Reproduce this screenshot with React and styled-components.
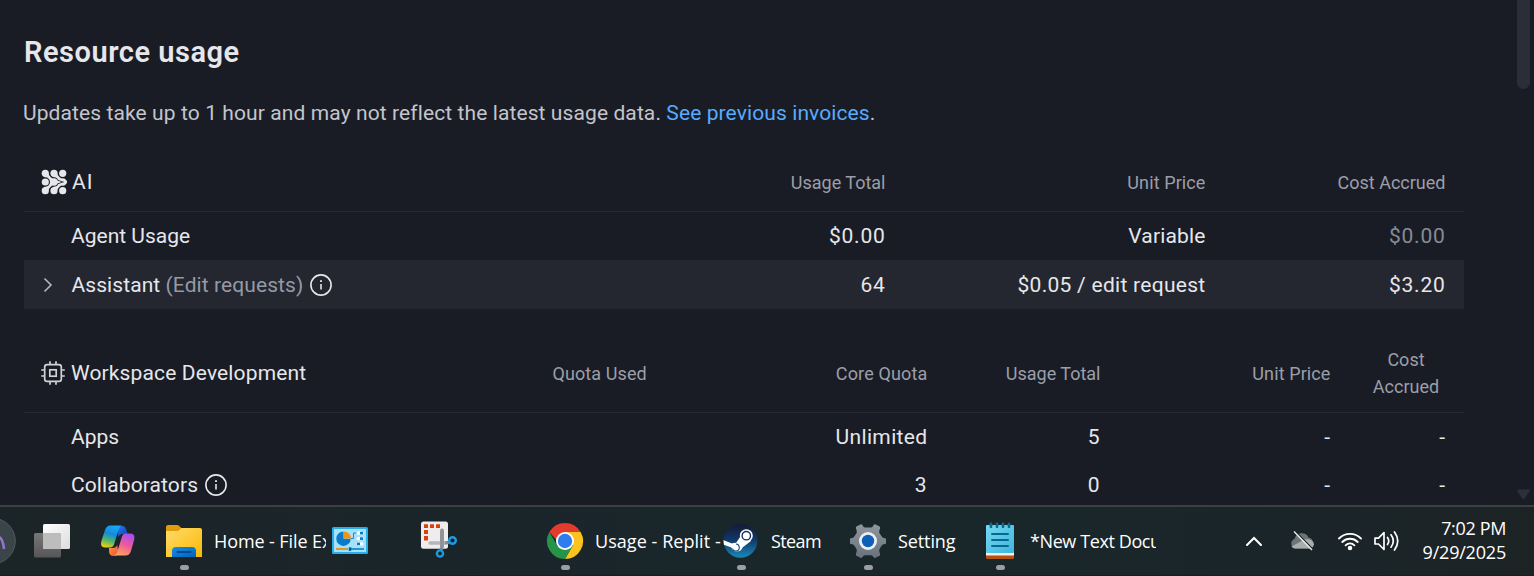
import React from "react";
import styled, { createGlobalStyle } from "styled-components";

const Global = createGlobalStyle`
  * { box-sizing: border-box; }
  body { margin: 0; overflow: hidden; background: #1a1c25; }
`;

const Screen = styled.div`
  width: 1534px;
  height: 576px;
  display: flex;
  flex-direction: column;
  overflow: hidden;
  background: #1a1c25;
  color: #e6e7eb;
  font-family: Roboto, "Noto Sans", sans-serif;
  font-size: 21px;
  line-height: 30px;
  white-space: nowrap;
`;

const Viewport = styled.div`
  height: 505px;
  display: flex;
  overflow: hidden;
`;

const Page = styled.main`
  flex: 1;
  padding: 32px 0 0 24px;
  overflow: hidden;
`;

const Scrollbar = styled.div`
  width: 17px;
  display: flex;
  flex-direction: column;
  align-items: flex-start;
  justify-content: space-between;
  padding-bottom: 5px;
`;

const Thumb = styled.div`
  width: 13px;
  height: 89px;
  border-radius: 0 0 7px 7px;
  background: #2b2d39;
`;

const Title = styled.h1`
  margin: 0;
  font-size: 29px;
  line-height: 40px;
  font-weight: 600;
  letter-spacing: 0.52px;
`;

const Note = styled.p`
  margin: 25px 0 0 -1px;
  line-height: 32px;
  color: #c2c5cc;
  letter-spacing: 0.1px;
`;

const Link = styled.a`
  color: #57abff;
`;

const Table = styled.section`
  width: 1440px;
  margin-top: ${(p) => p.$top}px;
`;

const Row = styled.div`
  display: grid;
  grid-template-columns: ${(p) => p.$cols};
  align-items: center;
  height: ${(p) => p.$height || 48}px;
  padding-right: 18.5px;
  background: ${(p) => (p.$active ? "#242630" : "transparent")};
`;

const HeadRow = styled(Row)`
  border-bottom: 1px solid #262834;
`;

const NameCell = styled.div`
  display: flex;
  align-items: center;
  gap: ${(p) => p.$gap || 6}px;
  padding-left: ${(p) => p.$inset || 47}px;
  letter-spacing: ${(p) => p.$track || 0}px;
`;

const Muted = styled.span`
  color: #959aa5;
`;

const Cell = styled.div`
  padding-right: ${(p) => p.$end || 0}px;
  text-align: right;
  letter-spacing: ${(p) => p.$track || 0}px;
  color: ${(p) => (p.$muted ? "#868b96" : "inherit")};
`;

const Head = styled.div`
  padding-top: 1px;
  font-size: 18px;
  line-height: 27px;
  text-align: right;
  letter-spacing: ${(p) => p.$track || 0}px;
  color: #9b9fa9;
`;

const WrappedHead = styled(Head)`
  padding: 0 0 0 36px;
  text-align: center;
`;

const Taskbar = styled.footer`
  height: 71px;
  display: flex;
  align-items: flex-start;
  border-top: 2px solid #3b4043;
  border-bottom: 1px solid #1a1a28;
  background: linear-gradient(90deg, #1b2427 0%, #1b252a 20%, #19262a 45%, #1a262a 75%, #1b2529 86%, #1d2325 100%);
  font-family: "Open Sans", "Noto Sans", sans-serif;
  font-size: 18px;
  line-height: 24px;
  color: #fff;
`;

const Avatar = styled.div`
  width: 34px;
  height: 68px;
  overflow: hidden;
`;

const TaskButton = styled.div`
  width: ${(p) => p.$width}px;
  height: 68px;
  display: flex;
  align-items: flex-start;
`;

const IconBox = styled.div`
  width: 36px;
  flex: none;
  display: flex;
  flex-direction: column;
  align-items: center;
  padding-top: 16px;
  svg { display: block; overflow: visible; }
`;

const Running = styled.i`
  width: 9px;
  height: 5px;
  margin-top: 6px;
  border-radius: 3px;
  background: #9a9fa1;
`;

const Label = styled.span`
  margin: 22px 0 0 12px;
  width: ${(p) => p.$width || 140}px;
  overflow: hidden;
  letter-spacing: ${(p) => p.$track}px;
`;

const Tray = styled.div`
  display: flex;
  align-items: center;
  height: 68px;
  flex: 1;
  svg { display: block; flex: none; }
`;

const TrayIcon = styled.span`
  margin-left: ${(p) => p.$left || 0}px;
`;

const Clock = styled.div`
  flex: 1;
  padding: 0 28px 3px 0;
  text-align: right;
`;

const ClockLine = styled.div`
  letter-spacing: ${(p) => p.$track}px;
`;

const Info = () => (
  <svg width="24" height="24" viewBox="0 0 24 24" fill="none" stroke="currentColor">
    <circle cx="12" cy="12" r="10.1" strokeWidth="1.6" />
    <path d="M12 11v5.500" strokeWidth="1.6" />
    <path d="M12 7.200v1.800" strokeWidth="1.9" />
  </svg>
);

const AiIcon = () => (
  <svg width="26" height="26" viewBox="0 0 26 26" fill="#e6e7eb">
    <path d="M13 4.300Q16 11 21.700 13 16 15 13 21.700" fill="none" stroke="#e6e7eb" strokeWidth="5" />
    <circle cx="13" cy="4.300" r="3.600" />
    <circle cx="21.700" cy="13" r="3.700" />
    <circle cx="13" cy="21.700" r="3.600" />
    <circle cx="21.700" cy="4.300" r="3.600" />
    <circle cx="21.700" cy="21.700" r="3.600" />
    <path d="M4.300 4.300Q7 11 13 13 7 15 4.300 21.700" fill="none" stroke="#1a1c25" strokeWidth="6.500" />
    <circle cx="13" cy="13" r="4.700" fill="#1a1c25" />
    <path d="M4.300 4.300Q7 11 13 13 7 15 4.300 21.700" fill="none" stroke="#e6e7eb" strokeWidth="5" />
    <circle cx="13" cy="13" r="3.700" />
    <circle cx="4.300" cy="4.300" r="3.600" />
    <circle cx="4.300" cy="21.700" r="3.600" />
    <circle cx="4.300" cy="13" r="4.700" fill="#1a1c25" />
    <circle cx="4.300" cy="13" r="3.600" />
  </svg>
);

const Chip = () => (
  <svg width="26" height="26" viewBox="0 0 26 26" fill="none" stroke="#d0d2d8" strokeWidth="1.7">
    <rect x="4.700" y="4.700" width="16.600" height="16.600" rx="2.400" />
    <rect x="9.800" y="9.800" width="6.400" height="6.400" />
    <path d="M10 1.200v3.500M16 1.200v3.500M10 21.300v3.500M16 21.300v3.500M1.200 10h3.500M1.200 16h3.500M21.300 10h3.500M21.300 16h3.500" />
  </svg>
);

const Chevron = () => (
  <svg width="10" height="16" viewBox="0 0 10 16" fill="none" stroke="#b4b7bf" strokeWidth="1.6">
    <path d="M1.500 1.500 8 8 1.500 14.500" />
  </svg>
);

const TaskView = () => (
  <svg width="36" height="36" viewBox="0 0 36 36">
    <defs>
      <linearGradient id="tvw" x1="0" y1="0" x2="1" y2="1"><stop stopColor="#fff" /><stop offset="1" stopColor="#dcdcdc" /></linearGradient>
      <linearGradient id="tvg" x1="0" y1="0" x2="0" y2="1"><stop stopColor="#777" /><stop offset="1" stopColor="#565656" /></linearGradient>
    </defs>
    <rect x="0" y="10" width="27" height="24.500" rx="1.500" fill="url(#tvg)" />
    <rect x="9" y="1" width="27" height="25" rx="1.500" fill="url(#tvw)" />
    <path d="M9 10h17a1 1 0 0 1 1 1v15H10a1 1 0 0 1-1-1Z" fill="#bdbdbd" />
  </svg>
);

const Copilot = () => (
  <svg width="36" height="36" viewBox="0 0 36 36">
    <defs>
      <linearGradient id="cpa" x1=".6" y1="0" x2=".3" y2="1"><stop stopColor="#18a8f4" /><stop offset=".4" stopColor="#1689dc" /><stop offset=".7" stopColor="#55b665" /><stop offset="1" stopColor="#f0ce14" /></linearGradient>
      <linearGradient id="cpb" x1=".7" y1="0" x2=".3" y2="1"><stop stopColor="#a94df0" /><stop offset=".5" stopColor="#ed5a9b" /><stop offset="1" stopColor="#ffa45b" /></linearGradient>
      <linearGradient id="cpc" x1="0" y1="0" x2="1" y2="1"><stop stopColor="#2380ef" /><stop offset="1" stopColor="#163bb8" /></linearGradient>
      <linearGradient id="cpd" x1="0" y1="0" x2="1" y2="1"><stop stopColor="#ff9b36" /><stop offset="1" stopColor="#ee4f43" /></linearGradient>
    </defs>
    <path d="M16 3h6.500q2.700 0 3.500 2.700l1.600 5.300h-5q-3 0-4.200 3L18 9Z" fill="url(#cpc)" />
    <path d="M9 25h4q3 0 4.200-3l1 6-2 5h-3q-3 0-4-3Z" fill="url(#cpd)" />
    <path d="M10.500 2.500H22q-2.500.7-3.500 4.500L14 21.500q-1 3-4 3H5q-5.200 0-3.600-6.500L5 7Q6.500 2.500 10.500 2.500Z" fill="url(#cpa)" />
    <path d="M25.500 32.500H14q2.500-.7 3.500-4.500L22 13.500q1-3 4-3h4.500q5.200 0 3.600 6.500L31 28Q29.500 32.500 25.500 32.500Z" fill="url(#cpb)" />
  </svg>
);

const Folder = () => (
  <svg width="36" height="36" viewBox="0 0 36 36">
    <defs>
      <linearGradient id="fda" x1="0" y1="0" x2="1" y2="1"><stop stopColor="#ffdc6b" /><stop offset="1" stopColor="#fbb804" /></linearGradient>
      <linearGradient id="fdb" x1="0" y1="0" x2="1" y2="1"><stop stopColor="#168be0" /><stop offset="1" stopColor="#0065bb" /></linearGradient>
    </defs>
    <path d="M0 12V4q0-2 2-2h9q1.400 0 2.300 1l2 2H18v7Z" fill="#e09c0a" />
    <path d="M0 8h11q1.700 0 3-1.500L15.300 5H34q2 0 2 2v27H0Z" fill="url(#fda)" />
    <path d="M6 34v-6q0-4 4-4h16q4 0 4 4v6Z" fill="url(#fdb)" />
    <path d="M11.500 29h13" stroke="#05488f" strokeWidth="1.800" strokeLinecap="round" />
  </svg>
);

const ControlPanel = () => (
  <svg width="36" height="36" viewBox="0 0 36 36">
    <rect x="0" y="4" width="36" height="27" rx="1.500" fill="#2aaee9" />
    <rect x="2" y="6" width="32" height="23" fill="#a3e2fa" />
    <path d="M11.500 8.500a7.200 7.200 0 1 0 7.200 7.200h-7.200Z" fill="#087bca" />
    <path d="M12 8.500a7.200 7.200 0 0 1 7 7h-7Z" fill="#f19313" />
    <path d="M19 15.500h2.500V10H25" fill="none" stroke="#3182b6" strokeWidth="1" />
    <rect x="24.500" y="8.500" width="7" height="3.300" rx="1.600" fill="#fff" /><rect x="28" y="8.800" width="3" height="2.600" fill="#0875ca" />
    <rect x="24.500" y="14" width="7" height="3.300" rx="1.600" fill="#fff" /><rect x="28" y="14.300" width="3" height="2.600" fill="#0875ca" />
    <rect x="24.500" y="19.300" width="7" height="3.300" rx="1.600" fill="#fff" /><rect x="25" y="19.600" width="3" height="2.600" fill="#0875ca" />
    <path d="M4 26h12" stroke="#e49423" strokeWidth="2" /><path d="M19 26h13" stroke="#168ed3" strokeWidth="1.800" /><path d="M18 24.300v3.600" stroke="#075f9d" strokeWidth="2.500" />
  </svg>
);

const Snip = () => (
  <svg width="36" height="36" viewBox="0 0 36 36">
    <rect x="0" y="-1.500" width="27" height="27.300" rx="2.500" fill="#eeecec" />
    <path d="M3 1.300h4V5H3ZM9 1.300h4V5H9ZM15 1.300h4V5h-4ZM3 7h4v4H3ZM3 13h4v4.500H3Z" fill="#d9400b" />
    <path d="M9 20h17" stroke="#b4b7ba" strokeWidth="3.400" strokeLinecap="round" />
    <path d="M21 7.500v16" stroke="#8f9498" strokeWidth="4" strokeLinecap="round" />
    <path d="m20 24 1 3M24 20l4-1" stroke="#808d96" strokeWidth="3" />
    <circle cx="31.500" cy="17.500" r="3.300" fill="none" stroke="#1c9ae2" strokeWidth="2.400" />
    <circle cx="19" cy="30.500" r="3.100" fill="none" stroke="#1c9ae2" strokeWidth="2.400" />
  </svg>
);

const Chrome = () => (
  <svg width="36" height="36" viewBox="0 0 36 36">
    <path d="M2.410 9A18 18 0 0 1 33.590 9H18L10.200 18Z" fill="#e33b2e" />
    <path d="M18 9h15.590A18 18 0 0 1 18 36L25.800 22.500Z" fill="#fcc31e" />
    <path d="M2.410 9 10.200 22.500 18 27 25.800 22.500 18 36A18 18 0 0 1 2.410 9Z" fill="#269447" />
    <circle cx="18" cy="18" r="9" fill="#fff" />
    <circle cx="18" cy="18" r="7.200" fill="#2f7cef" />
  </svg>
);

const Steam = () => (
  <svg width="36" height="36" viewBox="0 0 36 36">
    <defs>
      <linearGradient id="stm" x1="0" y1="0" x2="0" y2="1"><stop stopColor="#141b35" /><stop offset=".45" stopColor="#123565" /><stop offset="1" stopColor="#178ab9" /></linearGradient>
      <clipPath id="stc"><circle cx="17.500" cy="17.800" r="17" /></clipPath>
    </defs>
    <circle cx="17.500" cy="17.800" r="17" fill="url(#stm)" />
    <g clipPath="url(#stc)">
      <path d="M0 17 9 20.500q2-1 4-.6L17 14v-2L28 18l-8.500 6.500q-1 4-6 4-4 0-5-4L0 21.500Z" fill="#fff" />
    </g>
    <circle cx="23.300" cy="12.700" r="6.500" fill="#fff" />
    <circle cx="23.300" cy="12.700" r="4.200" fill="none" stroke="#173260" strokeWidth="1.400" />
    <path d="M9.500 25.600a3.500 3.500 0 1 0 3.500-4.600" fill="none" stroke="#254c78" strokeWidth="1.100" />
  </svg>
);

const Gear = () => (
  <svg width="36" height="36" viewBox="0 0 36 36">
    <defs><linearGradient id="gr" x1="0" y1="0" x2="0" y2="1"><stop stopColor="#8f969e" /><stop offset="1" stopColor="#68727d" /></linearGradient></defs>
    <path d="M11 1.200q1 0 1.500 1l.9 1.500q.8 1 2 .8h5.200q1.200.2 2-.8l.9-1.500q.5-1 1.500-1L29.600 3.500q.8.800.5 1.800l-.8 2.400q-.4 1.500.4 2.700l2 3.200q.8 1.200 2 1.400l2.300.5v5.200l-2.300.5q-1.200.2-2 1.400l-2 3.200q-.8 1.200-.4 2.700l.8 2.400q.3 1-.5 1.800L25 35q-1 0-1.500-1l-.9-1q-.8-1-2-.8h-5.200q-1.200-.2-2 .8l-.9 1q-.5 1-1.500 1L6.400 32.700q-.8-.8-.5-1.800l.8-2.400q.4-1.500-.4-2.700l-2-3.200q-.8-1.200-2-1.400L0 20.700v-5.200l2.300-.5q1.200-.2 2-1.400l2-3.200q.8-1.200.4-2.700l-.8-2.400q-.3-1 .5-1.800Z" fill="url(#gr)" />
    <circle cx="18" cy="18" r="9" fill="#eceff1" />
    <circle cx="18" cy="18" r="6.200" fill="#0d60b9" />
  </svg>
);

const Notepad = () => (
  <svg width="36" height="36" viewBox="0 0 36 36">
    <defs><linearGradient id="npd" x1="0" y1="0" x2="1" y2="1"><stop stopColor="#75d8f3" /><stop offset="1" stopColor="#40b5da" /></linearGradient></defs>
    <rect x="4" y="29" width="28" height="7" rx="1" fill="#b55211" />
    <rect x="4" y="27" width="28" height="5.500" fill="#f2eeeb" />
    <rect x="4" y="2" width="28" height="28" rx="1" fill="url(#npd)" />
    <path d="M9 .8v3M15 .8v3M21 .8v3M27 .8v3" stroke="#086b91" strokeWidth="2.700" strokeLinecap="round" />
    <path d="M10 11h16M10 17h16M10 23h16" stroke="#08698e" strokeWidth="2" strokeLinecap="round" />
  </svg>
);

const AI_COLS = "1fr 260px 320px 240px";
const DEV_COLS = "1fr 94px 281px 173px 230px 115px";

export default function App() {
  return (
    <Screen>
      <Global />
      <Viewport>
        <Page>
          <Title>Resource usage</Title>
          <Note>
            Updates take up to 1 hour and may not reflect the latest usage data. <Link>See previous invoices</Link>.
          </Note>
          <Table $top={23}>
            <HeadRow $cols={AI_COLS} $height={60}>
              <NameCell $inset={17} $gap={5} $track={1}><AiIcon />AI</NameCell>
              <Head>Usage Total</Head>
              <Head $track={0.1}>Unit Price</Head>
              <Head>Cost Accrued</Head>
            </HeadRow>
            <Row $cols={AI_COLS}>
              <NameCell>Agent Usage</NameCell>
              <Cell $track={0.75}>$0.00</Cell>
              <Cell $track={0.15}>Variable</Cell>
              <Cell $muted $track={0.75}>$0.00</Cell>
            </Row>
            <Row $cols={AI_COLS} $height={49} $active>
              <NameCell $inset={19} $gap={18}>
                <Chevron />
                <NameCell as="span" $inset={0.5} $track={0.08}>
                  <span>Assistant <Muted>(Edit requests)</Muted></span>
                  <Info />
                </NameCell>
              </NameCell>
              <Cell $track={0.7}>64</Cell>
              <Cell $track={0.28}>$0.05 / edit request</Cell>
              <Cell $track={0.75}>$3.20</Cell>
            </Row>
          </Table>
          <Table $top={24}>
            <HeadRow $cols={DEV_COLS} $height={80}>
              <NameCell $inset={16} $gap={5} $track={0.14}><Chip />Workspace Development</NameCell>
              <Head $track={0.1}>Quota Used</Head>
              <Head $track={0.15}>Core Quota</Head>
              <Head>Usage Total</Head>
              <Head $track={0.1}>Unit Price</Head>
              <WrappedHead>Cost<br />Accrued</WrappedHead>
            </HeadRow>
            <Row $cols={DEV_COLS}>
              <NameCell>Apps</NameCell>
              <Cell />
              <Cell $track={0.35}>Unlimited</Cell>
              <Cell $end={1}>5</Cell>
              <Cell $end={0.5}>-</Cell>
              <Cell $end={0.5}>-</Cell>
            </Row>
            <Row $cols={DEV_COLS}>
              <NameCell $track={0.1}>Collaborators<Info /></NameCell>
              <Cell />
              <Cell $end={1}>3</Cell>
              <Cell $end={1}>0</Cell>
              <Cell $end={0.5}>-</Cell>
              <Cell $end={0.5}>-</Cell>
            </Row>
          </Table>
        </Page>
        <Scrollbar>
          <Thumb />
          <svg width="14" height="11" viewBox="0 0 14 11"><path d="M1 .5h11q1.200.3.700 1.500l-5 7.600q-1.200 1.200-2.400 0L.3 2Q-.2.800 1 .5Z" fill="#2d2f3c" /></svg>
        </Scrollbar>
      </Viewport>
      <Taskbar>
        <Avatar>
          <svg width="16" height="68" viewBox="0 0 16 68">
            <circle cx="-7.500" cy="34" r="22.800" fill="#3b4448" stroke="#53595c" strokeWidth="1" />
            <path d="M-1 30q4 2 5 12" fill="none" stroke="#8f77cf" strokeWidth="2.600" />
          </svg>
        </Avatar>
        <TaskButton $width={66}><IconBox><TaskView /></IconBox></TaskButton>
        <TaskButton $width={66}><IconBox><Copilot /></IconBox></TaskButton>
        <TaskButton $width={166}>
          <IconBox><Folder /><Running /></IconBox>
          <Label $width={112} $track={-0.1}>Home - File Ex</Label>
        </TaskButton>
        <TaskButton $width={89}><IconBox><ControlPanel /></IconBox></TaskButton>
        <TaskButton $width={126}><IconBox><Snip /></IconBox></TaskButton>
        <TaskButton $width={176}>
          <IconBox><Chrome /><Running /></IconBox>
          <Label $width={126} $track={0.05}>Usage - Replit -</Label>
        </TaskButton>
        <TaskButton $width={127}>
          <IconBox><Steam /><Running /></IconBox>
          <Label $track={-0.6}>Steam</Label>
        </TaskButton>
        <TaskButton $width={132}>
          <IconBox><Gear /><Running /></IconBox>
          <Label $track={-0.1}>Setting</Label>
        </TaskButton>
        <TaskButton $width={260}>
          <IconBox><Notepad /><Running /></IconBox>
          <Label $width={126} $track={-0.4}>*New Text Docu</Label>
        </TaskButton>
        <Tray>
          <TrayIcon $left={4}>
            <svg width="16" height="10" viewBox="0 0 16 10" fill="none" stroke="#fff" strokeWidth="2" strokeLinecap="round"><path d="m1 9 7-7 7 7" /></svg>
          </TrayIcon>
          <TrayIcon $left={28}>
            <svg width="24" height="20" viewBox="0 0 24 20">
              <path d="M5 17.500a5 5 0 0 1-.5-9.500 7.500 7.500 0 0 1 14-1.500A5.700 5.700 0 0 1 19 17.500Z" fill="#6f7576" />
              <path d="M1.500 15.500 15 8.300q8-.8 9 5-.7 4.200-5 4.200H5q-2.300 0-3.500-2Z" fill="#a9adae" />
              <path d="m5.200 0 18 18.500" stroke="#1b2529" strokeWidth="1.200" />
              <path d="m4 .5 18 18.500" stroke="#e9ebeb" strokeWidth="1.400" />
            </svg>
          </TrayIcon>
          <TrayIcon $left={24}>
            <svg width="24" height="19" viewBox="0 0 24 19" fill="none" stroke="#fff" strokeWidth="1.800" strokeLinecap="round">
              <path d="M1 6.500a15.500 15.500 0 0 1 22 0M4.300 10a10.800 10.800 0 0 1 15.400 0M7.600 13.300a6.200 6.200 0 0 1 8.800 0" /><circle cx="12" cy="16" r="1.400" fill="#fff" />
            </svg>
          </TrayIcon>
          <TrayIcon $left={12}>
            <svg width="25" height="20" viewBox="0 0 25 20" fill="none" stroke="#fff" strokeWidth="1.700" strokeLinecap="round" strokeLinejoin="round">
              <path d="M1 7.200V13h3.500l5.500 5.500V1.500L4.500 7.200ZM13.500 6.500q2.500 3.500 0 7M17 3.800q4.600 6.200 0 12.400M20.500 1q6.500 9 0 18" />
            </svg>
          </TrayIcon>
          <Clock>
            <ClockLine $track={-0.35}>7:02 PM</ClockLine>
            <ClockLine $track={-0.2}>9/29/2025</ClockLine>
          </Clock>
        </Tray>
      </Taskbar>
    </Screen>
  );
}
